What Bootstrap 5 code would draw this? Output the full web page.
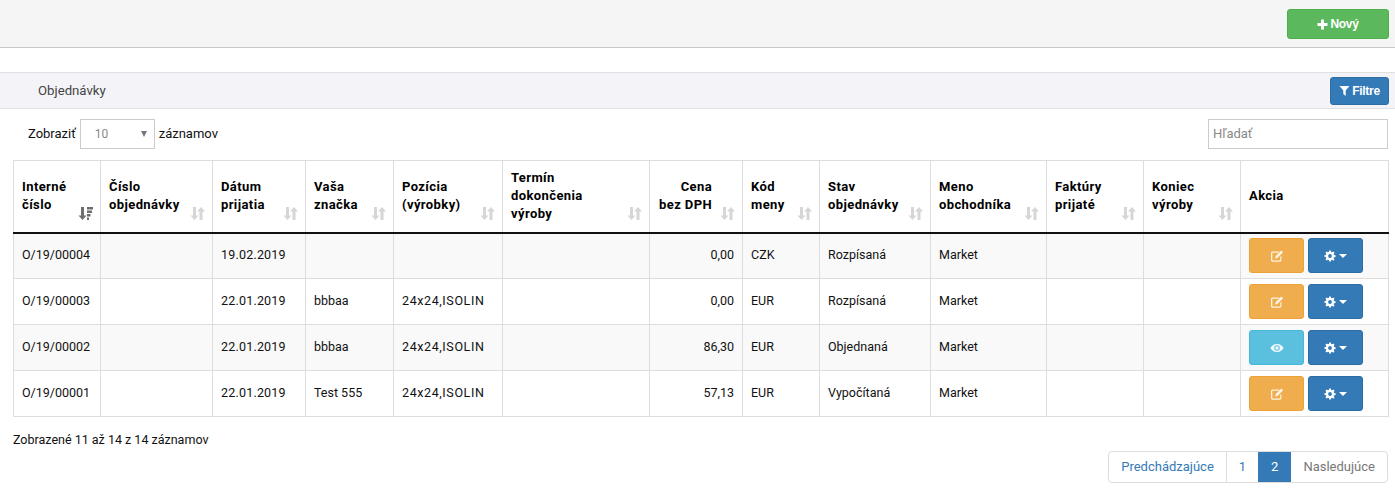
<!DOCTYPE html>
<html lang="sk">
<head>
<meta charset="utf-8">
<title>Objednávky</title>
<link href="https://cdn.jsdelivr.net/npm/bootstrap@5.3.0/dist/css/bootstrap.min.css" rel="stylesheet">
<style>
html,body{height:497px;overflow:hidden}
body{font-family:Roboto,"Liberation Sans",sans-serif;font-size:13px;color:#111;background:#fff}
.topbar{height:48px;background:#f5f5f5;border-bottom:1px solid #c8c8c8;padding:9px 6px 0 0;justify-content:flex-end}
.act{font-family:"Liberation Sans",Arial,sans-serif;font-size:12px;letter-spacing:-.3px;font-weight:700;color:#fff;border-radius:3px;display:inline-flex;align-items:center;justify-content:center;gap:2px;padding:0;border-width:1px;border-style:solid}
.act-new{width:102px;height:30px;background:#5cb85c;border-color:#4cae4c}
.act-filter{width:59px;height:28px;background:#337ab7;border-color:#2e6da4}
.subbar{margin-top:24px;height:37px;background:#f4f4f8;border-top:1px solid #e0e0e0;border-bottom:1px solid #e0e0e0;padding:0 6px 0 38px;color:#444;font-size:13.2px}
.tools{height:51px;padding:10px 7px 0 28px}
.lensel{width:75px;height:30px;border:1px solid #ccc;color:#888;padding:0 7px 0 14px;margin:0 4px 0 4px;font-size:12px}
.arrow{width:0;height:0;border-left:3.5px solid transparent;border-right:3.5px solid transparent;border-top:6px solid #777}
.searchbox{width:180px;height:30px;border:1px solid #ccc;padding:0 4px;color:#888;font-size:13px}
.tablewrap{padding:0 7px 0 13px}
.grid-t{table-layout:fixed;width:1375px;border-collapse:collapse;margin:0}
.grid-t th,.grid-t td{border:1px solid #ddd;padding:0 8px 2px;font-size:12.5px;line-height:18px;vertical-align:middle;color:#111}
.grid-t th{height:72px;font-size:13px;font-weight:700;position:relative;border-bottom:2px solid #111;color:#000;letter-spacing:.4px;padding-bottom:0}
.grid-t tbody tr{height:46px}
.grid-t tbody tr:nth-child(odd) td{background:#f9f9f9}
.sorter{position:absolute;right:7px;bottom:11px;width:15px;height:15px;display:block}
.grid-t td.numc{text-align:right;padding-right:8px}
.grid-t td.datec{letter-spacing:.2px}
.grid-t td.posc{letter-spacing:.6px}
.grid-t th.th-num{text-align:right;padding-right:30px}
.cell-btn{width:55px;height:35px;border-radius:3px;border-width:1px;border-style:solid;display:inline-flex;align-items:center;justify-content:center;gap:3px;padding:0;vertical-align:middle}
.b-edit{background:#f0ad4e;border-color:#eea236}
.b-view{background:#5bc0de;border-color:#46b8da}
.b-gear{background:#337ab7;border-color:#2e6da4}
.caret-w{width:0;height:0;border-left:4px solid transparent;border-right:4px solid transparent;border-top:4px solid #fff}
.acts{gap:4px;margin-top:2px}
.summary{padding:14px 0 0 13px;height:34px;font-size:12.5px}
.pager-wrap{padding:0 7px 0 0;justify-content:flex-end}
.pager{display:flex;height:32px;border:1px solid #ddd;border-radius:4px;font-size:13px;line-height:30px;overflow:hidden}
.pager span{display:block}
.pg-prev{color:#337ab7;border-right:1px solid #ddd;padding:0 12px}
.pg-one{color:#337ab7;padding:0 12px}
.pg-cur{background:#337ab7;color:#fff;margin-top:-1px;height:32px;line-height:32px;padding:0 13px}
.pg-next{color:#777;padding:0 12px}
</style>
</head>
<body>
<svg width="0" height="0" class="position-absolute">
<defs>
<symbol id="ic-sort" viewBox="0 0 15 15"><path d="M3 1h3v8.500h2.500L4.500 14 .5 9.500H3zM11 1l4 4.500h-2.500V14h-3V5.500H7z" fill="#d6d6d6"/></symbol>
<symbol id="ic-sortdesc" viewBox="0 0 15 15"><path d="M3 1h3v8.500h2.500L4.500 14 .5 9.500H3z" fill="#6e6e6e"/><path d="M9 1h6v2.500H9zM9 4.500h5V7H9zM9 8h3.500v2.500H9zM9 11.500h2V14H9z" fill="#6e6e6e"/></symbol>
<symbol id="ic-edit" viewBox="0 0 14 14"><path d="M2.500 2.500h7L8.300 3.700H3a.7.7 0 0 0-.7.700v6.400c0 .4.300.7.700.7h6.500c.4 0 .7-.3.700-.7V8l1.200-1.200v4.200c0 1-.8 1.800-1.800 1.800H2.800C1.800 12.800 1 12 1 11V4.300c0-1 .7-1.800 1.500-1.800z" fill="#fff" opacity=".85"/><path d="M11.300 1.500l1.800 1.800-5.600 5.600-2.300.5.500-2.300z" fill="#fff" opacity=".85"/></symbol>
<symbol id="ic-eye" viewBox="0 0 14 14"><path fill-rule="evenodd" d="M7 3C3.800 3 1.300 5.200.5 7c.8 1.800 3.300 4 6.500 4s5.700-2.200 6.500-4C12.700 5.200 10.200 3 7 3zm0 1.200A2.800 2.800 0 1 1 7 9.800 2.800 2.800 0 0 1 7 4.200z" fill="#fff" opacity=".9"/><circle cx="7" cy="7" r="1.700" fill="#fff" opacity=".9"/></symbol>
<symbol id="ic-gear" viewBox="0 0 14 14"><path fill-rule="evenodd" d="M6 1h2l.3 1.700 1.100.5L10.900 2.300l1.400 1.400-1 1.500.5 1.100 1.700.3v2l-1.700.3-.5 1.100 1 1.500-1.400 1.400-1.500-1-1.100.5L8 14H6l-.3-1.700-1.100-.5-1.500 1-1.400-1.400 1-1.500-.5-1.100L.5 8.500v-2l1.700-.3.5-1.100-1-1.500 1.400-1.400 1.500 1 1.100-.5zM7 5.300a2.200 2.200 0 1 0 0 4.400 2.200 2.200 0 0 0 0-4.400z" fill="#fff" transform="translate(0 -.5)"/></symbol>
</defs>
</svg>

<div class="topbar d-flex">
  <button type="button" class="act act-new">
    <svg width="11" height="11" viewBox="0 0 11 11"><path d="M4 0.500h3V4h3.500v3H7v3.500H4V7H.5V4H4z" fill="#fff"/></svg>
    Nový
  </button>
</div>

<div class="subbar d-flex align-items-center justify-content-between">
  <span>Objednávky</span>
  <button type="button" class="act act-filter">
    <svg width="11" height="11" viewBox="0 0 11 11"><path d="M.5 1h10L6.700 5.500V11L4.300 9V5.500z" fill="#fff"/></svg>
    Filtre
  </button>
</div>

<div class="tools d-flex align-items-start justify-content-between">
  <div class="d-flex align-items-center">
    <span>Zobraziť</span>
    <div class="lensel d-flex align-items-center justify-content-between"><span>10</span><i class="arrow"></i></div>
    <span>záznamov</span>
  </div>
  <div class="searchbox d-flex align-items-center">Hľadať</div>
</div>

<div class="tablewrap">
<table class="grid-t">
  <colgroup>
    <col style="width:87px"><col style="width:112px"><col style="width:93px"><col style="width:88px"><col style="width:109px"><col style="width:147px"><col style="width:93px"><col style="width:77px"><col style="width:111px"><col style="width:116px"><col style="width:97px"><col style="width:97px"><col style="width:148px">
  </colgroup>
  <thead>
    <tr>
      <th>Interné<br>číslo<svg class="sorter"><use href="#ic-sortdesc"/></svg></th>
      <th>Číslo<br>objednávky<svg class="sorter"><use href="#ic-sort"/></svg></th>
      <th>Dátum<br>prijatia<svg class="sorter"><use href="#ic-sort"/></svg></th>
      <th>Vaša<br>značka<svg class="sorter"><use href="#ic-sort"/></svg></th>
      <th>Pozícia<br>(výrobky)<svg class="sorter"><use href="#ic-sort"/></svg></th>
      <th>Termín<br>dokončenia<br>výroby<svg class="sorter"><use href="#ic-sort"/></svg></th>
      <th class="th-num">Cena<br>bez DPH<svg class="sorter"><use href="#ic-sort"/></svg></th>
      <th>Kód<br>meny<svg class="sorter"><use href="#ic-sort"/></svg></th>
      <th>Stav<br>objednávky<svg class="sorter"><use href="#ic-sort"/></svg></th>
      <th>Meno<br>obchodníka<svg class="sorter"><use href="#ic-sort"/></svg></th>
      <th>Faktúry<br>prijaté<svg class="sorter"><use href="#ic-sort"/></svg></th>
      <th>Koniec<br>výroby<svg class="sorter"><use href="#ic-sort"/></svg></th>
      <th>Akcia</th>
    </tr>
  </thead>
  <tbody>
    <tr>
      <td>O/19/00004</td><td></td><td class="datec">19.02.2019</td><td></td><td></td><td></td><td class="numc">0,00</td><td>CZK</td><td>Rozpísaná</td><td>Market</td><td></td><td></td>
      <td><div class="d-flex acts"><button type="button" class="cell-btn b-edit" aria-label="Upraviť"><svg width="14" height="14"><use href="#ic-edit"/></svg></button><button type="button" class="cell-btn b-gear" aria-label="Nastavenia"><svg width="12" height="12" viewBox="0 0 14 14"><use href="#ic-gear"/></svg><i class="caret-w"></i></button></div></td>
    </tr>
    <tr>
      <td>O/19/00003</td><td></td><td class="datec">22.01.2019</td><td>bbbaa</td><td class="posc">24x24,ISOLIN</td><td></td><td class="numc">0,00</td><td>EUR</td><td>Rozpísaná</td><td>Market</td><td></td><td></td>
      <td><div class="d-flex acts"><button type="button" class="cell-btn b-edit" aria-label="Upraviť"><svg width="14" height="14"><use href="#ic-edit"/></svg></button><button type="button" class="cell-btn b-gear" aria-label="Nastavenia"><svg width="12" height="12" viewBox="0 0 14 14"><use href="#ic-gear"/></svg><i class="caret-w"></i></button></div></td>
    </tr>
    <tr>
      <td>O/19/00002</td><td></td><td class="datec">22.01.2019</td><td>bbbaa</td><td class="posc">24x24,ISOLIN</td><td></td><td class="numc">86,30</td><td>EUR</td><td>Objednaná</td><td>Market</td><td></td><td></td>
      <td><div class="d-flex acts"><button type="button" class="cell-btn b-view" aria-label="Zobraziť"><svg width="14" height="14"><use href="#ic-eye"/></svg></button><button type="button" class="cell-btn b-gear" aria-label="Nastavenia"><svg width="12" height="12" viewBox="0 0 14 14"><use href="#ic-gear"/></svg><i class="caret-w"></i></button></div></td>
    </tr>
    <tr>
      <td>O/19/00001</td><td></td><td class="datec">22.01.2019</td><td>Test 555</td><td class="posc">24x24,ISOLIN</td><td></td><td class="numc">57,13</td><td>EUR</td><td>Vypočítaná</td><td>Market</td><td></td><td></td>
      <td><div class="d-flex acts"><button type="button" class="cell-btn b-edit" aria-label="Upraviť"><svg width="14" height="14"><use href="#ic-edit"/></svg></button><button type="button" class="cell-btn b-gear" aria-label="Nastavenia"><svg width="12" height="12" viewBox="0 0 14 14"><use href="#ic-gear"/></svg><i class="caret-w"></i></button></div></td>
    </tr>
  </tbody>
</table>
</div>

<div class="summary">Zobrazené 11 až 14 z 14 záznamov</div>
<div class="pager-wrap d-flex">
  <div class="pager"><span class="pg-prev">Predchádzajúce</span><span class="pg-one">1</span><span class="pg-cur">2</span><span class="pg-next">Nasledujúce</span></div>
</div>
</body>
</html>
